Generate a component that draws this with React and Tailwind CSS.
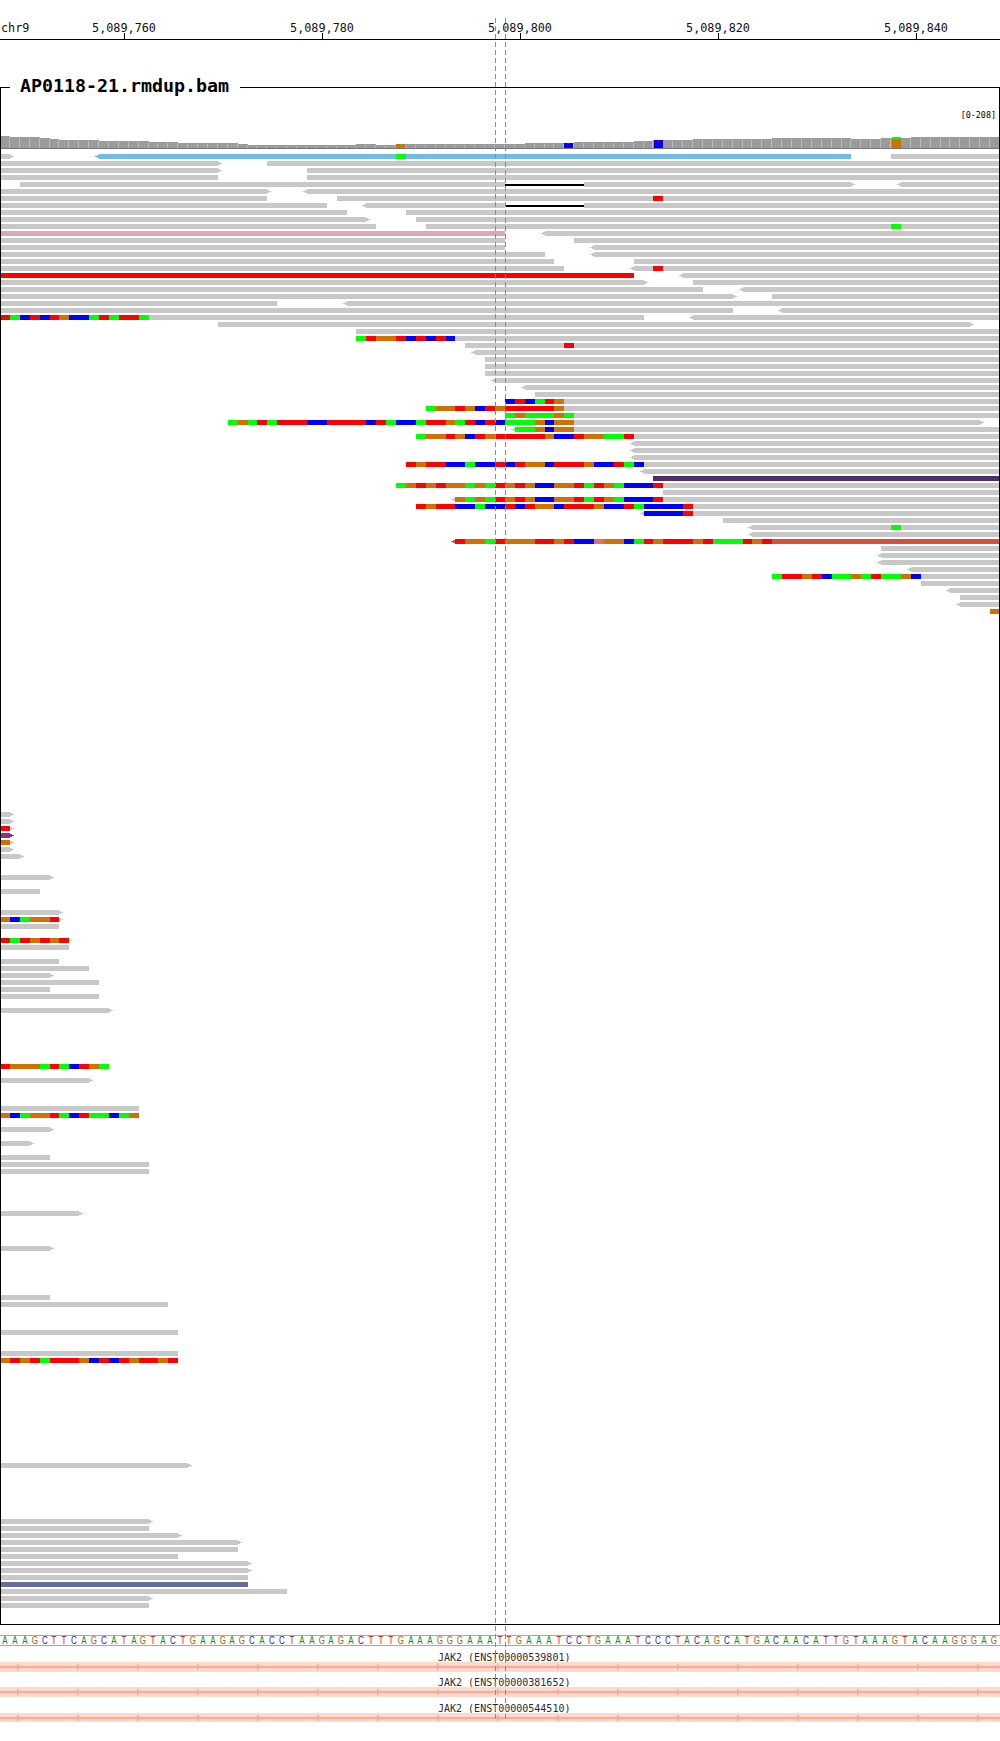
const BASE_COLORS = { A: "#00ff00", C: "#0000ff", G: "#d17105", T: "#ff0000", P: "#dc7070" };
const GRAY = "#c8c8c8";
const bx = (n) => Math.round(9.9 * n);
const rowTop = (i) => 154 + 7 * i;

// [row, start, end, arrow, color, mismatchStart, mismatchBases, arrowColor]
const READS = [
  [0, 0, 1, "R"], [0, 10, 86, "L", "#70bce6", 40, "A"], [0, 90, 101],
  [1, 0, 22, "R"], [1, 27, 101],
  [2, 0, 22, "R"], [2, 31, 101],
  [3, 0, 22], [3, 31, 101],
  [4, 2, 51], [4, 59, 86, "R"], [4, 91, 101, "L"],
  [5, 0, 27, "R"], [5, 31, 101, "L"],
  [6, 0, 27], [6, 34, 101, null, null, 66, "T"],
  [7, 0, 33], [7, 37, 51, "L"], [7, 59, 101],
  [8, 0, 35], [8, 41, 101],
  [9, 0, 37, "R"], [9, 42, 101],
  [10, 0, 38], [10, 43, 101, null, null, 90, "A"],
  [11, 0, 51, null, "#dca8b9"], [11, 55, 101, "L"],
  [12, 0, 51], [12, 58, 101],
  [13, 0, 51], [13, 60, 101, "L"],
  [14, 0, 55], [14, 60, 101, "L"],
  [15, 0, 56], [15, 64, 101],
  [16, 0, 57], [16, 64, 101, "L", null, 66, "T"],
  [17, 0, 64, null, "#ff0000"], [17, 69, 101, "L"],
  [18, 0, 65, "R"], [18, 70, 101],
  [19, 0, 71], [19, 75, 101, "L"],
  [20, 0, 74, "R"], [20, 78, 101],
  [21, 0, 28], [21, 35, 101, "L"],
  [22, 0, 74], [22, 79, 101, "L"],
  [23, 0, 65, null, null, 0, "TACTCTGCCATATTA"], [23, 70, 101, "L"],
  [24, 22, 98, "R"],
  [25, 36, 101],
  [26, 36, 101, null, null, 36, "ATGGTCTCTC"],
  [27, 47, 101, null, null, 57, "T"],
  [28, 48, 101, "L"],
  [29, 49, 101], [30, 49, 101], [31, 49, 101],
  [32, 50, 101, "L"],
  [33, 53, 101, "L"],
  [34, 54, 101],
  [35, 51, 101, null, null, 51, "CTCATG"],
  [36, 43, 101, null, null, 43, "AGGTGCTGTTTTTG"],
  [37, 51, 101, null, null, 51, "AGAAAGA"],
  [38, 23, 99, "R", null, 23, "AGATATTTCCTTTTCTACCATTGATCTCAAAGCGG"],
  [39, 52, 101, "L", null, 52, "AAGCGG"],
  [40, 42, 101, null, null, 42, "AGGTGCTGTTTTTGCCTGGAAT"],
  [41, 64, 101, "L"], [42, 64, 101, "L"], [43, 64, 101, "L"],
  [44, 41, 101, null, null, 41, "TGTTCCACCTCTGGCTTTGCCTAC"],
  [45, 65, 101, "L"],
  [46, 66, 101, null, "#4f2c6d"],
  [47, 40, 101, null, null, 40, "AGTGTGGAGATGTGCCGGTATGACCCT"],
  [48, 67, 101],
  [49, 46, 101, "L", null, 46, "GAGATGTGCCGGTATGACCCT"],
  [50, 42, 101, null, null, 42, "TGTTCCACCTCTGGCTTTGCCTACCCCT"],
  [51, 65, 101, "L", null, 65, "CCCCT"],
  [52, 73, 101],
  [53, 76, 101, "L", null, 90, "A"],
  [54, 76, 101, "L"],
  [55, 46, 101, "L", "#d5523a", 46, "TGGATGGGTTGTCCPGGCATGTTTGTAAATGT"],
  [56, 89, 101],
  [57, 89, 101, "L"], [58, 89, 101, "L"],
  [59, 92, 101, "L"],
  [60, 78, 101, null, null, 78, "ATTGTCAAGATAAGC"],
  [61, 93, 101],
  [62, 96, 101, "L"],
  [63, 97, 101],
  [64, 97, 101, "L"],
  [65, 100, 101, null, "#d17105"],
  [94, 0, 1, "R"], [95, 0, 1, "R"],
  [96, 0, 1, "R", null, 0, "T"],
  [97, 0, 1, "R", "#8f2f85"],
  [98, 0, 1, "R", null, 0, "G"],
  [99, 0, 1, "R"],
  [100, 0, 2, "R"],
  [103, 0, 5, "R"],
  [105, 0, 4],
  [108, 0, 6, "R"],
  [109, 0, 6, "R", null, 0, "GCAGGT"],
  [110, 0, 6],
  [112, 0, 7, "R", null, 0, "TATGTGT", "#f6ee8e"],
  [113, 0, 7],
  [115, 0, 6],
  [116, 0, 9],
  [117, 0, 5, "R"],
  [118, 0, 10],
  [119, 0, 5],
  [120, 0, 10],
  [122, 0, 11, "R"],
  [130, 0, 11, null, null, 0, "TGGGATACTGA"],
  [132, 0, 9, "R"],
  [136, 0, 14],
  [137, 0, 14, null, null, 0, "GCAGGTACTAACAG"],
  [139, 0, 5, "R"],
  [141, 0, 3, "R"],
  [143, 0, 5],
  [144, 0, 15],
  [145, 0, 15],
  [151, 0, 8, "R"],
  [156, 0, 5, "R"],
  [163, 0, 5],
  [164, 0, 17],
  [168, 0, 18],
  [171, 0, 18],
  [172, 0, 18, null, null, 0, "GTGTATTTGCTCTGTTGT"],
  [187, 0, 19, "R"],
  [195, 0, 15, "R"],
  [196, 0, 15],
  [197, 0, 18, "R"],
  [198, 0, 24, "R"],
  [199, 0, 24],
  [200, 0, 18],
  [201, 0, 25, "R"],
  [202, 0, 25, "R"],
  [203, 0, 25],
  [204, 0, 25, null, "#676c9f"],
  [205, 0, 29],
  [206, 0, 15, "R"],
  [207, 0, 15],
];

const DELETIONS = [[4, 51, 59], [7, 51, 59]];

const tops = (() => {
  const t = [];
  const add = (from, to, v) => { for (let n = from; n <= to; n++) t[n] = v; };
  add(0, 0, 136); add(1, 3, 137); add(4, 4, 138); add(5, 5, 139); add(6, 9, 140);
  add(10, 14, 141); add(15, 17, 142); add(18, 23, 143); add(24, 24, 144);
  add(25, 35, 145); add(36, 37, 144); add(38, 39, 145); add(40, 47, 144);
  add(48, 52, 144); add(53, 56, 143); add(57, 57, 143); add(58, 63, 142);
  add(64, 65, 141); add(66, 69, 140); add(70, 77, 139); add(78, 85, 138);
  add(86, 88, 139); add(89, 89, 138); add(90, 91, 138); add(92, 100, 137);
  return t;
})();

function Coverage() {
  return (
    <g>
      {tops.map((top, n) => (
        <g key={n}>
          <rect x={bx(n)} y={top} width={bx(n + 1) - bx(n)} height={148 - top} fill="#9b9b9b" />
          <rect x={bx(n + 1) - 1} y={top + 1} width={1} height={147 - top} fill="#bcbcbc" />
        </g>
      ))}
      <rect x={396} y={144} width={9} height={4} fill="#d17105" />
      <rect x={400} y={144} width={1} height={1} fill="#00ff00" />
      <rect x={564} y={143} width={9} height={5} fill="#0000ff" />
      <rect x={568} y={143} width={1} height={1} fill="#ff0000" />
      <rect x={654} y={140} width={9} height={8} fill="#0000ff" />
      <rect x={658} y={140} width={1} height={1} fill="#ff0000" />
      <rect x={892} y={137} width={9} height={2} fill="#00ff00" />
      <rect x={892} y={139} width={9} height={9} fill="#d17105" />
      <rect x={0} y={148} width={1000} height={1} fill="#777777" />
    </g>
  );
}

function Read({ r }) {
  const [row, start, end, arrow, color, mmStart, mm, arrowColor] = r;
  const y = rowTop(row);
  const fill = color || GRAY;
  const a = arrowColor || fill;
  const x0 = bx(start);
  const x1 = Math.min(bx(end), 1000);
  return (
    <g>
      <rect x={x0} y={y} width={x1 - x0} height={5} fill={fill} />
      {arrow === "R" && (
        <>
          <rect x={x1} y={y + 1} width={2} height={3} fill={a} />
          <rect x={x1 + 2} y={y + 2} width={2} height={1} fill={a} />
        </>
      )}
      {arrow === "L" && (
        <>
          <rect x={x0 - 2} y={y + 1} width={2} height={3} fill={a} />
          <rect x={x0 - 4} y={y + 2} width={2} height={1} fill={a} />
        </>
      )}
      {mm &&
        mm.split("").map((b, i) => (
          <rect
            key={i}
            x={bx(mmStart + i)}
            y={y}
            width={bx(mmStart + i + 1) - bx(mmStart + i)}
            height={5}
            fill={BASE_COLORS[b]}
          />
        ))}
    </g>
  );
}

const SEQUENCE =
  "AAAGCTTCAGCATAGTACTGAAGAGCACCTAAGAGACTTTGAAAGGGAAATTGAAATCCTGAAATCCCTACAGCATGACAACATTGTAAAGTACAAGGGAG";

const seqClass = {
  A: "text-[#0b8f0b]",
  C: "text-[#1f1f8f]",
  G: "text-[#9c651f]",
  T: "text-[#ad1414]",
};

const LABELS = ["5,089,760", "5,089,780", "5,089,800", "5,089,820", "5,089,840"];

function Gene({ name, barClass, lineY }) {
  const marks = [];
  for (let x = 17; x < 1000; x += 60) marks.push(x);
  return (
    <div className="h-[25px] flex flex-col justify-end">
      <div className="pl-[438px] h-[14px] leading-[19px] text-[10px] text-[#2c2c2c] whitespace-nowrap font-['DejaVu_Sans_Mono',monospace]">
        {name}
      </div>
      <div className={`relative w-full bg-[#ffd9cc] ${barClass}`}>
        <svg width="1000" height="10" viewBox="0 0 1000 10" className="block absolute left-0 top-0">
          <rect x="0" y={lineY} width="1000" height="2" fill="#ffa897" />
          {marks.map((x) => (
            <polygon key={x} points={`${x},${lineY - 3} ${x + 3},${lineY + 1} ${x},${lineY + 5}`} fill="#ffa897" />
          ))}
        </svg>
      </div>
    </div>
  );
}

export default function App() {
  return (
    <div className="relative w-[1000px] h-[1741px] overflow-hidden bg-white text-black font-['DejaVu_Sans_Mono',monospace]">
      {/* Ruler */}
      <div className="h-[40px] flex items-end border-b border-black">
        <div className="w-[25px] shrink-0 h-[14px] mb-[4px] leading-[14px] text-[11.8px] pl-[1px] whitespace-nowrap overflow-visible text-[#111]">chr9</div>
        {LABELS.map((l) => (
          <div key={l} className="w-[198px] shrink-0 flex flex-col items-center">
            <div className="h-[14px] leading-[14px] text-[11.8px] whitespace-nowrap text-[#111]">{l}</div>
            <div className="w-px h-[6px] -mt-[2px] bg-black" />
          </div>
        ))}
      </div>

      {/* Alignment track */}
      <div className="relative mt-[47px] w-[1000px] h-[1538px] border border-black">
        <div className="absolute left-[9px] -top-[14px] w-[230px] pl-[10px] h-[24px] leading-[24px] bg-white text-[18.3px] font-bold text-black whitespace-nowrap">
          AP0118-21.rmdup.bam
        </div>
        <div className="absolute right-[3px] top-[21px] text-[8.4px] leading-[12px] text-black">[0-208]</div>
        <svg width="998" height="1536" viewBox="1 88 998 1536" shapeRendering="crispEdges" className="block">
          <Coverage />
          {READS.map((r, i) => (
            <Read key={i} r={r} />
          ))}
          {DELETIONS.map(([row, a, b], i) => (
            <rect key={i} x={bx(a)} y={rowTop(row) + 2} width={bx(b) - bx(a)} height={2} fill="#000000" />
          ))}
        </svg>
      </div>

      {/* Sequence */}
      <div className="mt-[10px] h-[11px] flex items-center border-y border-[#a8a8a8] font-['Liberation_Sans',sans-serif] text-[10px]">
        {SEQUENCE.split("").map((b, i) => (
          <span key={i} className={`w-[9.9px] shrink-0 text-center leading-[9px] scale-x-[0.8] ${seqClass[b]}`}>
            {b}
          </span>
        ))}
      </div>

      {/* Genes */}
      <div className="mt-[1px]">
        <Gene name="JAK2 (ENST00000539801)" barClass="h-[10px]" lineY={4} />
        <Gene name="JAK2 (ENST00000381652)" barClass="h-[10px]" lineY={4} />
        <Gene name="JAK2 (ENST00000544510)" barClass="h-[9px] overflow-hidden" lineY={4} />
      </div>

      {/* Region-of-interest center guide lines */}
      <svg width="1000" height="1741" className="absolute left-0 top-0 pointer-events-none" shapeRendering="crispEdges">
        <line x1="495.5" y1="18" x2="495.5" y2="1722" stroke="#8c8c8c" strokeWidth="1" strokeDasharray="5 3" />
        <line x1="505.5" y1="18" x2="505.5" y2="1722" stroke="#8c8c8c" strokeWidth="1" strokeDasharray="5 3" />
      </svg>
    </div>
  );
}
